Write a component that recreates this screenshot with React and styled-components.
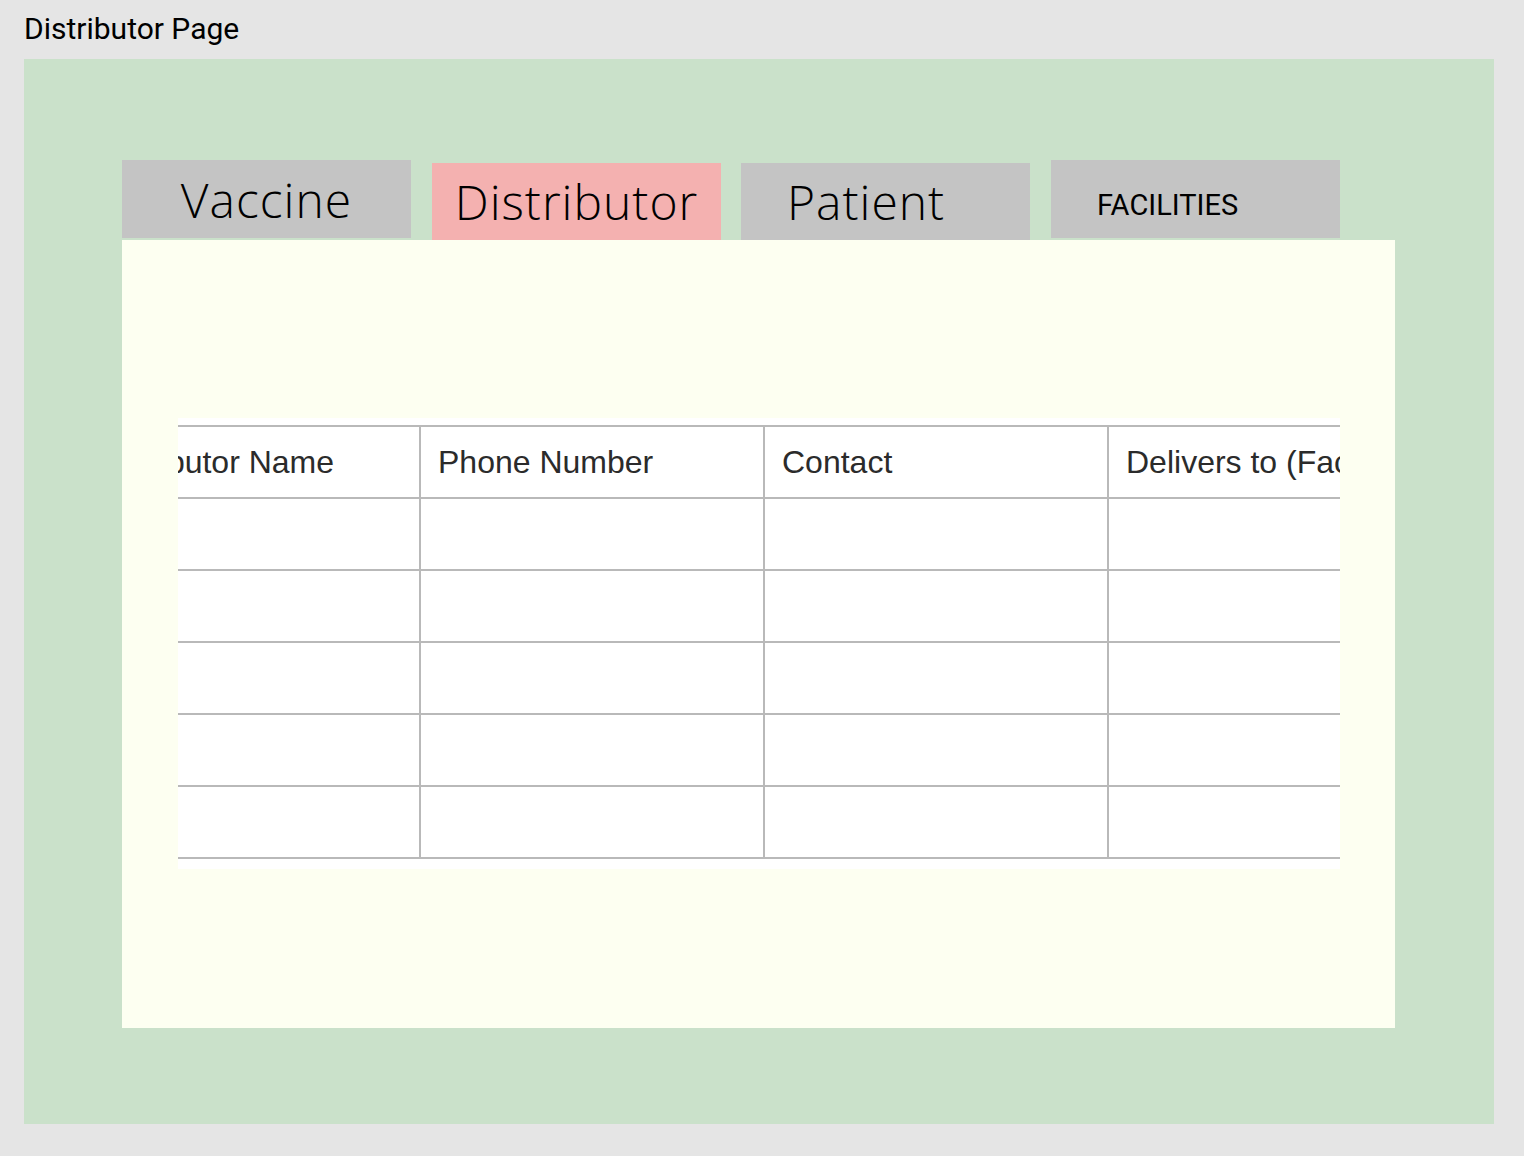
import React from 'react';
import styled, { createGlobalStyle } from 'styled-components';

const GlobalStyle = createGlobalStyle`
  html, body {
    margin: 0;
    padding: 0;
    background: #e5e5e5;
  }
  body {
    font-family: Roboto, "Liberation Sans", sans-serif;
  }
`;

const Page = styled.div`
  width: 1524px;
  height: 1156px;
  padding: 0 30px 0 24px;
  box-sizing: border-box;
  background: #e5e5e5;
`;

const Title = styled.div`
  height: 59px;
  padding-top: 11px;
  box-sizing: border-box;
  font-family: Roboto, sans-serif;
  font-size: 30px;
  line-height: 36px;
  color: #000;
`;

const Frame = styled.div`
  width: 1470px;
  height: 1065px;
  background: #cae1ca;
  padding: 101px 0 0 98px;
  box-sizing: border-box;
`;

const TabRow = styled.div`
  display: flex;
  align-items: flex-start;
  gap: 20px;
  height: 80px;
`;

const Tab = styled.div`
  width: 289px;
  height: ${(p) => (p.$low ? '77px' : '78px')};
  margin-top: ${(p) => (p.$low ? '3px' : '0')};
  margin-left: ${(p) => (p.$extra ? '1px' : '0')};
  background: ${(p) => (p.$active ? '#f4b1b0' : '#c4c4c4')};
  display: flex;
  align-items: center;
  justify-content: ${(p) => (p.$left ? 'flex-start' : 'center')};
  padding-left: ${(p) => (p.$left ? '46px' : '0')};
  box-sizing: border-box;
  font-family: "Open Sans", sans-serif;
  font-weight: 300;
  font-size: 48px;
  letter-spacing: 1px;
  color: #000;
`;

const SmallLabel = styled.span`
  font-family: Roboto, sans-serif;
  font-weight: 400;
  font-size: 29px;
  letter-spacing: 0;
  padding-top: 12px;
`;

const Panel = styled.div`
  width: 1273px;
  height: 788px;
  background: #fdfff1;
  padding: 178px 55px 0 56px;
  box-sizing: border-box;
`;

const TableClip = styled.div`
  width: 1162px;
  overflow: hidden;
  background: #fff;
  padding: 7px 0 10px;
`;

const Table = styled.table`
  margin-left: -103px;
  border-collapse: collapse;
  table-layout: fixed;
  width: 1376px;
  font-family: "Liberation Sans", Arial, sans-serif;
  font-size: 32px;
  color: #2b2b2b;
`;

const Cell = styled.td`
  width: 344px;
  height: 72px;
  padding: 0 0 0 17px;
  border: 2px solid #b9b9b9;
  box-sizing: border-box;
  white-space: nowrap;
  overflow: hidden;
  vertical-align: middle;
  text-align: left;
`;

const HeadCell = styled(Cell).attrs({ as: 'th' })`
  font-weight: normal;
`;

const tabs = [
  { label: 'Vaccine' },
  { label: 'Distributor', active: true, low: true, extra: true },
  { label: 'Patient', low: true, left: true },
  { label: 'FACILITIES', left: true, small: true, extra: true },
];

const columns = ['Distributor Name', 'Phone Number', 'Contact', 'Delivers to (Facilities)'];
const rows = [0, 1, 2, 3, 4];

export default function App() {
  return (
    <>
      <GlobalStyle />
      <Page>
        <Title>Distributor Page</Title>
        <Frame>
          <TabRow>
            {tabs.map((t) => (
              <Tab key={t.label} $active={t.active} $low={t.low} $left={t.left} $extra={t.extra}>
                {t.small ? <SmallLabel>{t.label}</SmallLabel> : t.label}
              </Tab>
            ))}
          </TabRow>
          <Panel>
            <TableClip>
              <Table>
                <thead>
                  <tr>
                    {columns.map((c) => (
                      <HeadCell key={c}>{c}</HeadCell>
                    ))}
                  </tr>
                </thead>
                <tbody>
                  {rows.map((r) => (
                    <tr key={r}>
                      {columns.map((c) => (
                        <Cell key={c} />
                      ))}
                    </tr>
                  ))}
                </tbody>
              </Table>
            </TableClip>
          </Panel>
        </Frame>
      </Page>
    </>
  );
}
